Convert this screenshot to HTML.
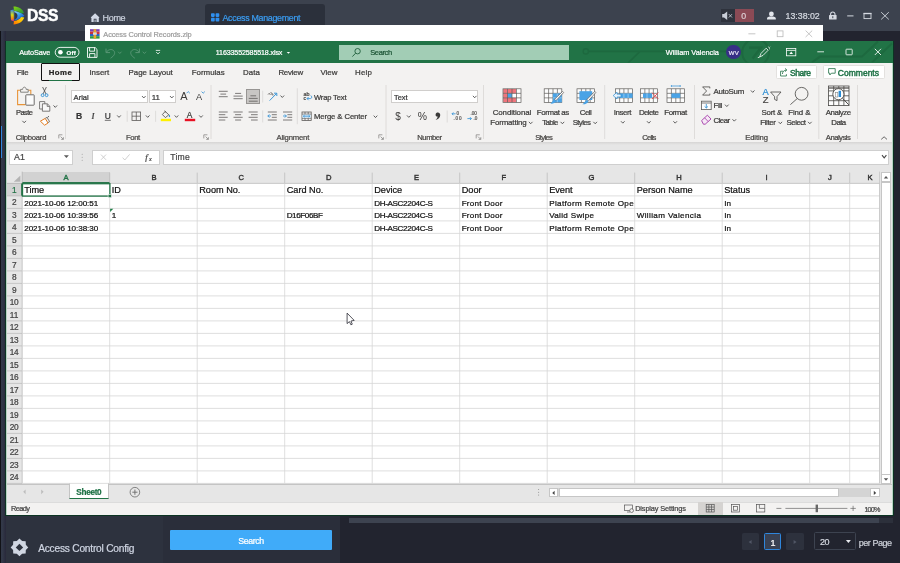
<!DOCTYPE html>
<html><head><meta charset="utf-8"><title>Access Control Records</title>
<style>
html,body{margin:0;padding:0;background:#22242f;}
#r{position:relative;width:900px;height:563px;overflow:hidden;background:#22242f;font-family:"Liberation Sans",sans-serif;}
#r div,#r span{position:absolute;display:block;white-space:nowrap;box-sizing:border-box;}
#r svg{position:absolute;left:0;top:0;}
#r span{-webkit-text-stroke:0.22px currentColor;}
</style></head><body><div id="r">
<div id="t" style="left:0;top:0;width:900px;height:563px;will-change:transform;">
<div style="left:0px;top:31px;width:162.5px;height:532px;background:#2d323e;"></div>
<div style="left:162.5px;top:516px;width:177.5px;height:47px;background:#2a2e3a;"></div>
<div style="left:0px;top:0px;width:900px;height:31px;background:#3c424e;"></div>
<div style="left:0px;top:31px;width:6px;height:532px;background:linear-gradient(90deg,#323848 0,#323848 40%,#28283a 100%);"></div>
<div style="left:0px;top:31px;width:0.8px;height:532px;background:#111217;"></div>
<div style="left:1px;top:126px;width:1.3px;height:31.5px;background:#2f86dc;"></div>
<span style="left:27px;top:5.73px;font-size:15.6px;line-height:20px;color:#ffffff;letter-spacing:-0.379px;font-weight:700;-webkit-text-stroke:0.5px #fff;">DSS</span>
<span style="left:102.6px;top:12.27px;font-size:9px;line-height:12px;color:#ccd2de;letter-spacing:-0.343px;">Home</span>
<div style="left:205px;top:4px;width:120px;height:27px;background:#2b303b;border-radius:3px 3px 0 0;"></div>
<span style="left:222.5px;top:12.14px;font-size:8.9px;line-height:12px;color:#3a9cf2;letter-spacing:-0.302px;">Access Management</span>
<div style="left:720.6px;top:9px;width:14.2px;height:12.8px;background:#2e323c;"></div>
<div style="left:734.8px;top:9px;width:19.5px;height:12.8px;background:#8b4a55;"></div>
<span style="left:741.2px;top:11.10px;font-size:8.8px;line-height:11px;color:#dccfd3;">0</span>
<span style="left:785.6px;top:11.00px;font-size:8.8px;line-height:11px;color:#d5d9e1;letter-spacing:-0.011px;">13:38:02</span>
<div style="left:85px;top:25px;width:738.4px;height:30px;background:#ffffff;"></div>
<span style="left:103.3px;top:29.80px;font-size:7.4px;line-height:10px;color:#9c9c9c;letter-spacing:-0.096px;">Access Control Records.zip</span>
<div style="left:4.7px;top:40.8px;width:889.4px;height:475.4px;background:#0c3423;"></div>
<div style="left:5.8px;top:40.8px;width:887.3px;height:474.2px;background:#f3f2f1;border:0.7px solid #b5d3c2;border-top:0;"></div>
<div style="left:5.6px;top:40.8px;width:887.7px;height:21.8px;background:#217346;"></div>
<svg width="900" height="563" viewBox="0 0 900 563"><defs><clipPath id="tb"><rect x="6" y="41" width="887" height="21.6"/></clipPath></defs><g stroke="#1d693f" stroke-width="2" fill="none" clip-path="url(#tb)"><circle cx="755.6" cy="52.4" r="13.4"/><path d="M749 47.6 L761 47.6 L752.6 58.6" stroke-width="2.4"/><path d="M588.6 51.4 L742 51.4 M628 63 L640 51.4" stroke-width="1.6"/><circle cx="585.8" cy="51.4" r="2.6" stroke-width="1.4"/><path d="M812 62.4 L820 56.6 L862 56.6 L878 41.4"/><path d="M872 62.4 L892 43.4"/></g></svg>
<span style="left:19.3px;top:48.26px;font-size:7.3px;line-height:9px;color:#fff;letter-spacing:-0.078px;">AutoSave</span>
<span style="left:66.6px;top:48.90px;font-size:6px;line-height:8px;color:#fff;letter-spacing:0.265px;font-weight:700;">Off</span>
<span style="left:215.8px;top:48.69px;font-size:7.1px;line-height:9px;color:#fff;letter-spacing:-0.130px;">11633552585518.xlsx</span>
<div style="left:339px;top:44.6px;width:230.4px;height:15.2px;background:#a2cdb5;"></div>
<span style="left:370.2px;top:48.04px;font-size:7.5px;line-height:10px;color:#1d5536;letter-spacing:-0.355px;">Search</span>
<span style="left:665.8px;top:47.90px;font-size:7.4px;line-height:10px;color:#fff;letter-spacing:-0.037px;">William Valencia</span>
<div style="left:726.2px;top:44.7px;width:14.8px;height:14.8px;background:#372f86;border-radius:50%;"></div>
<span style="left:728.7px;top:48.90px;font-size:6px;line-height:8px;color:#e8e6f5;letter-spacing:0.440px;">WV</span>
<span style="left:16.8px;top:68.48px;font-size:7.9px;line-height:10px;color:#3b3a39;letter-spacing:-0.306px;">File</span>
<div style="left:40.8px;top:62.8px;width:39.6px;height:18px;border:1.5px solid #111;border-radius:1px;"></div>
<span style="left:48.8px;top:68.44px;font-size:7.8px;line-height:10px;color:#252423;letter-spacing:0.439px;font-weight:700;">Home</span>
<div style="left:48.8px;top:79.5px;width:23px;height:1.3px;background:#217346;"></div>
<span style="left:89.4px;top:68.48px;font-size:7.9px;line-height:10px;color:#3b3a39;letter-spacing:0.010px;">Insert</span>
<span style="left:128.6px;top:68.48px;font-size:7.9px;line-height:10px;color:#3b3a39;letter-spacing:-0.016px;">Page Layout</span>
<span style="left:191.7px;top:68.48px;font-size:7.9px;line-height:10px;color:#3b3a39;letter-spacing:0.022px;">Formulas</span>
<span style="left:243px;top:68.48px;font-size:7.9px;line-height:10px;color:#3b3a39;letter-spacing:0.097px;">Data</span>
<span style="left:278.4px;top:68.48px;font-size:7.9px;line-height:10px;color:#3b3a39;letter-spacing:-0.222px;">Review</span>
<span style="left:320.4px;top:68.48px;font-size:7.9px;line-height:10px;color:#3b3a39;letter-spacing:0.005px;">View</span>
<span style="left:355px;top:68.48px;font-size:7.9px;line-height:10px;color:#3b3a39;letter-spacing:0.255px;">Help</span>
<div style="left:775.6px;top:65.3px;width:41.8px;height:13.8px;background:#fff;border:0.7px solid #e3e1df;border-radius:1.5px;"></div>
<div style="left:822.6px;top:65.3px;width:62.2px;height:13.8px;background:#fff;border:0.7px solid #e3e1df;border-radius:1.5px;"></div>
<span style="left:790px;top:68.09px;font-size:8.5px;line-height:11px;color:#1e7145;letter-spacing:-0.424px;-webkit-text-stroke:0.45px;">Share</span>
<span style="left:837.8px;top:68.09px;font-size:8.5px;line-height:11px;color:#1e7145;letter-spacing:0.015px;-webkit-text-stroke:0.45px;">Comments</span>
<span style="left:15.7px;top:132.91px;font-size:7.7px;line-height:10px;color:#484644;letter-spacing:-0.269px;">Clipboard</span>
<span style="left:126px;top:132.91px;font-size:7.7px;line-height:10px;color:#484644;letter-spacing:-0.400px;">Font</span>
<span style="left:276.6px;top:132.91px;font-size:7.7px;line-height:10px;color:#484644;letter-spacing:-0.178px;">Alignment</span>
<span style="left:417.3px;top:132.91px;font-size:7.7px;line-height:10px;color:#484644;letter-spacing:-0.495px;">Number</span>
<span style="left:535.2px;top:132.91px;font-size:7.7px;line-height:10px;color:#484644;letter-spacing:-0.637px;">Styles</span>
<span style="left:642.2px;top:132.91px;font-size:7.7px;line-height:10px;color:#484644;letter-spacing:-0.708px;">Cells</span>
<span style="left:745.2px;top:132.91px;font-size:7.7px;line-height:10px;color:#484644;letter-spacing:-0.127px;">Editing</span>
<span style="left:825.8px;top:132.91px;font-size:7.7px;line-height:10px;color:#484644;letter-spacing:-0.526px;">Analysis</span>
<span style="left:16px;top:108.14px;font-size:7.5px;line-height:10px;color:#3b3a39;letter-spacing:-0.541px;">Paste</span>
<div style="left:71.3px;top:89.8px;width:76.4px;height:13.6px;background:#fff;border:0.7px solid #d0cecc;"></div>
<span style="left:73.6px;top:92.67px;font-size:7.6px;line-height:10px;color:#333;letter-spacing:0.000px;">Arial</span>
<div style="left:149.3px;top:89.8px;width:27px;height:13.6px;background:#fff;border:0.7px solid #d0cecc;"></div>
<span style="left:151.8px;top:92.78px;font-size:7.9px;line-height:10px;color:#333;letter-spacing:-0.016px;">11</span>
<span style="left:180.2px;top:88.89px;font-size:11px;line-height:14px;color:#3b3a39;letter-spacing:0.030px;-webkit-text-stroke:0;">A</span>
<span style="left:196px;top:91.24px;font-size:9.2px;line-height:12px;color:#3b3a39;letter-spacing:0.036px;-webkit-text-stroke:0;">A</span>
<span style="left:76px;top:111.03px;font-size:8.6px;line-height:11px;color:#333;letter-spacing:-1.592px;font-weight:700;">B</span>
<span style="left:91.444px;top:111.10px;font-size:8.8px;line-height:11px;color:#333;font-style:italic;font-family:'Liberation Serif',serif;">I</span>
<span style="left:104.8px;top:110.56px;font-size:8.4px;line-height:11px;color:#333;letter-spacing:-0.248px;">U</span>
<span style="left:186.8px;top:109.66px;font-size:8.4px;line-height:11px;color:#3b3a39;letter-spacing:0.972px;">A</span>
<div style="left:246px;top:89.2px;width:14.2px;height:14.5px;background:#c8c6c4;border:0.7px solid #979593;"></div>
<span style="left:303.4px;top:90.68px;font-size:5.4px;line-height:7px;color:#484644;">ab</span>
<span style="left:303.4px;top:95.48px;font-size:5.4px;line-height:7px;color:#484644;">c</span>
<span style="left:313.9px;top:92.87px;font-size:7.6px;line-height:10px;color:#3b3a39;letter-spacing:-0.154px;">Wrap Text</span>
<span style="left:313.9px;top:112.31px;font-size:7.7px;line-height:10px;color:#3b3a39;letter-spacing:-0.082px;">Merge &amp; Center</span>
<div style="left:391.3px;top:89.6px;width:87.2px;height:13.8px;background:#fff;border:0.7px solid #d0cecc;"></div>
<span style="left:394px;top:92.60px;font-size:7.4px;line-height:10px;color:#333;letter-spacing:0.007px;">Text</span>
<span style="left:395.2px;top:110.23px;font-size:10px;line-height:13px;color:#3b3a39;letter-spacing:-0.150px;-webkit-text-stroke:0;">$</span>
<span style="left:417.7px;top:109.87px;font-size:10.4px;line-height:14px;color:#3b3a39;letter-spacing:0.344px;-webkit-text-stroke:0;">%</span>
<span style="left:456.6px;top:111.20px;font-size:4.6px;line-height:6px;color:#5e5c5a;">0</span>
<span style="left:453.4px;top:116.00px;font-size:4.6px;line-height:6px;color:#5e5c5a;letter-spacing:0.903px;">.00</span>
<span style="left:470.4px;top:111.20px;font-size:4.6px;line-height:6px;color:#5e5c5a;letter-spacing:0.003px;">.00</span>
<span style="left:473.4px;top:116.00px;font-size:4.6px;line-height:6px;color:#5e5c5a;">.0</span>
<span style="left:492.7px;top:108.28px;font-size:7.9px;line-height:10px;color:#3b3a39;letter-spacing:-0.094px;">Conditional</span>
<span style="left:490.2px;top:118.28px;font-size:7.9px;line-height:10px;color:#3b3a39;letter-spacing:-0.129px;">Formatting</span>
<span style="left:536.8px;top:108.28px;font-size:7.9px;line-height:10px;color:#3b3a39;letter-spacing:-0.381px;">Format as</span>
<span style="left:542.2px;top:118.28px;font-size:7.9px;line-height:10px;color:#3b3a39;letter-spacing:-0.645px;">Table</span>
<span style="left:579.7px;top:108.28px;font-size:7.9px;line-height:10px;color:#3b3a39;letter-spacing:-0.509px;">Cell</span>
<span style="left:572.7px;top:118.28px;font-size:7.9px;line-height:10px;color:#3b3a39;letter-spacing:-0.646px;">Styles</span>
<span style="left:613.8px;top:108.28px;font-size:7.9px;line-height:10px;color:#3b3a39;letter-spacing:-0.410px;">Insert</span>
<span style="left:639px;top:108.28px;font-size:7.9px;line-height:10px;color:#3b3a39;letter-spacing:-0.606px;">Delete</span>
<span style="left:664.3px;top:108.28px;font-size:7.9px;line-height:10px;color:#3b3a39;letter-spacing:-0.421px;">Format</span>
<span style="left:713.5px;top:87.08px;font-size:7.9px;line-height:10px;color:#3b3a39;letter-spacing:-0.285px;">AutoSum</span>
<span style="left:713.5px;top:101.08px;font-size:7.9px;line-height:10px;color:#3b3a39;letter-spacing:-0.424px;">Fill</span>
<span style="left:713.5px;top:115.78px;font-size:7.9px;line-height:10px;color:#3b3a39;letter-spacing:-0.545px;">Clear</span>
<span style="left:762.6px;top:85.72px;font-size:9.4px;line-height:12px;color:#2a8dd4;letter-spacing:0.302px;">A</span>
<span style="left:762.8px;top:94.12px;font-size:9.4px;line-height:12px;color:#484644;letter-spacing:0.666px;">Z</span>
<span style="left:761.5px;top:108.28px;font-size:7.9px;line-height:10px;color:#3b3a39;letter-spacing:-0.252px;">Sort &amp;</span>
<span style="left:760.2px;top:118.28px;font-size:7.9px;line-height:10px;color:#3b3a39;letter-spacing:-0.348px;">Filter</span>
<span style="left:788.2px;top:108.28px;font-size:7.9px;line-height:10px;color:#3b3a39;letter-spacing:-0.106px;">Find &amp;</span>
<span style="left:786.5px;top:118.28px;font-size:7.9px;line-height:10px;color:#3b3a39;letter-spacing:-0.492px;">Select</span>
<span style="left:825.8px;top:108.28px;font-size:7.9px;line-height:10px;color:#3b3a39;letter-spacing:-0.454px;">Analyze</span>
<span style="left:831.3px;top:118.28px;font-size:7.9px;line-height:10px;color:#3b3a39;letter-spacing:-0.570px;">Data</span>
<div style="left:6.8px;top:141.6px;width:885.4px;height:342px;background:#e6e6e6;"></div>
<div style="left:6.8px;top:141.6px;width:885.4px;height:3.4px;background:linear-gradient(#d6d5d4,#e6e6e6);"></div>
<div style="left:9.3px;top:149.6px;width:63.4px;height:15.4px;background:#fff;border:0.7px solid #cfcfcf;"></div>
<span style="left:14px;top:152.40px;font-size:8.8px;line-height:11px;color:#444;letter-spacing:0.020px;">A1</span>
<div style="left:92.2px;top:149.6px;width:67.8px;height:15.4px;background:#fff;border:0.7px solid #cfcfcf;"></div>
<span style="left:145.2px;top:152.03px;font-size:8.6px;line-height:11px;color:#444;font-style:italic;font-family:'Liberation Serif',serif;">f</span>
<span style="left:148.89px;top:155.40px;font-size:6px;line-height:8px;color:#444;font-style:italic;font-family:'Liberation Serif',serif;">x</span>
<div style="left:162.7px;top:149.6px;width:726px;height:15.4px;background:#fff;border:0.7px solid #cfcfcf;"></div>
<span style="left:170.2px;top:152.33px;font-size:8.6px;line-height:11px;color:#444;letter-spacing:0.270px;">Time</span>
<div style="left:22.2px;top:183.4px;width:857.3px;height:300px;background:#fff;"></div>
<div style="left:22.2px;top:171.6px;width:87.5px;height:11.8px;background:#d2d2d2;border-bottom:0.7px solid #217346;"></div>
<div style="left:6.8px;top:183.4px;width:15.4px;height:12.5px;background:#d2d2d2;border-right:1.2px solid #217346;"></div>
<span style="left:63.43px;top:173.27px;font-size:7.6px;line-height:10px;color:#217346;-webkit-text-stroke:0.4px;">A</span>
<span style="left:151.38px;top:173.27px;font-size:7.6px;line-height:10px;color:#333;-webkit-text-stroke:0.4px;">B</span>
<span style="left:238.61px;top:173.27px;font-size:7.6px;line-height:10px;color:#333;-webkit-text-stroke:0.4px;">C</span>
<span style="left:326.11px;top:173.27px;font-size:7.6px;line-height:10px;color:#333;-webkit-text-stroke:0.4px;">D</span>
<span style="left:413.88px;top:173.27px;font-size:7.6px;line-height:10px;color:#333;-webkit-text-stroke:0.4px;">E</span>
<span style="left:501.56px;top:173.27px;font-size:7.6px;line-height:10px;color:#333;-webkit-text-stroke:0.4px;">F</span>
<span style="left:588.43px;top:173.27px;font-size:7.6px;line-height:10px;color:#333;-webkit-text-stroke:0.4px;">G</span>
<span style="left:676.2px;top:173.27px;font-size:7.6px;line-height:10px;color:#333;-webkit-text-stroke:0.4px;">H</span>
<span style="left:765.5px;top:173.27px;font-size:7.6px;line-height:10px;color:#333;-webkit-text-stroke:0.4px;">I</span>
<span style="left:828.08px;top:173.27px;font-size:7.6px;line-height:10px;color:#333;-webkit-text-stroke:0.4px;">J</span>
<span style="left:867.45px;top:173.27px;font-size:7.6px;line-height:10px;color:#333;-webkit-text-stroke:0.4px;">K</span>
<span style="left:11.95px;top:184.97px;font-size:8.3px;line-height:11px;color:#217346;">1</span>
<span style="left:11.95px;top:197.47px;font-size:8.3px;line-height:11px;color:#444;">2</span>
<span style="left:11.95px;top:209.97px;font-size:8.3px;line-height:11px;color:#444;">3</span>
<span style="left:11.95px;top:222.47px;font-size:8.3px;line-height:11px;color:#444;">4</span>
<span style="left:11.95px;top:234.97px;font-size:8.3px;line-height:11px;color:#444;">5</span>
<span style="left:11.95px;top:247.47px;font-size:8.3px;line-height:11px;color:#444;">6</span>
<span style="left:11.95px;top:259.97px;font-size:8.3px;line-height:11px;color:#444;">7</span>
<span style="left:11.95px;top:272.47px;font-size:8.3px;line-height:11px;color:#444;">8</span>
<span style="left:11.95px;top:284.97px;font-size:8.3px;line-height:11px;color:#444;">9</span>
<span style="left:9.7px;top:297.47px;font-size:8.3px;line-height:11px;color:#444;letter-spacing:-0.413px;">10</span>
<span style="left:9.7px;top:309.97px;font-size:8.3px;line-height:11px;color:#444;letter-spacing:0.168px;">11</span>
<span style="left:9.7px;top:322.47px;font-size:8.3px;line-height:11px;color:#444;letter-spacing:-0.413px;">12</span>
<span style="left:9.7px;top:334.97px;font-size:8.3px;line-height:11px;color:#444;letter-spacing:-0.413px;">13</span>
<span style="left:9.7px;top:347.47px;font-size:8.3px;line-height:11px;color:#444;letter-spacing:-0.413px;">14</span>
<span style="left:9.7px;top:359.97px;font-size:8.3px;line-height:11px;color:#444;letter-spacing:-0.413px;">15</span>
<span style="left:9.7px;top:372.47px;font-size:8.3px;line-height:11px;color:#444;letter-spacing:-0.413px;">16</span>
<span style="left:9.7px;top:384.97px;font-size:8.3px;line-height:11px;color:#444;letter-spacing:-0.413px;">17</span>
<span style="left:9.7px;top:397.47px;font-size:8.3px;line-height:11px;color:#444;letter-spacing:-0.413px;">18</span>
<span style="left:9.7px;top:409.97px;font-size:8.3px;line-height:11px;color:#444;letter-spacing:-0.413px;">19</span>
<span style="left:9.7px;top:422.47px;font-size:8.3px;line-height:11px;color:#444;letter-spacing:-0.413px;">20</span>
<span style="left:9.7px;top:434.97px;font-size:8.3px;line-height:11px;color:#444;letter-spacing:-0.413px;">21</span>
<span style="left:9.7px;top:447.47px;font-size:8.3px;line-height:11px;color:#444;letter-spacing:-0.413px;">22</span>
<span style="left:9.7px;top:459.97px;font-size:8.3px;line-height:11px;color:#444;letter-spacing:-0.413px;">23</span>
<span style="left:9.7px;top:472.47px;font-size:8.3px;line-height:11px;color:#444;letter-spacing:-0.413px;">24</span>
<span style="left:24.2px;top:184.18px;font-size:9.17px;line-height:12px;color:#111;">Time</span>
<span style="left:111.7px;top:184.18px;font-size:9.17px;line-height:12px;color:#111;">ID</span>
<span style="left:199.2px;top:184.18px;font-size:9.17px;line-height:12px;color:#111;">Room No.</span>
<span style="left:286.7px;top:184.18px;font-size:9.17px;line-height:12px;color:#111;">Card No.</span>
<span style="left:374.2px;top:184.18px;font-size:9.17px;line-height:12px;color:#111;">Device</span>
<span style="left:461.7px;top:184.18px;font-size:9.17px;line-height:12px;color:#111;">Door</span>
<span style="left:549.2px;top:184.18px;font-size:9.17px;line-height:12px;color:#111;">Event</span>
<span style="left:636.7px;top:184.18px;font-size:9.17px;line-height:12px;color:#111;">Person Name</span>
<span style="left:724.2px;top:184.18px;font-size:9.17px;line-height:12px;color:#111;">Status</span>
<span style="left:24.2px;top:198.00px;font-size:8.1px;line-height:11px;color:#111;letter-spacing:-0.062px;">2021-10-06 12:00:51</span>
<span style="left:374.2px;top:198.00px;font-size:8.1px;line-height:11px;color:#111;letter-spacing:-0.351px;">DH-ASC2204C-S</span>
<span style="left:461.7px;top:198.00px;font-size:8.1px;line-height:11px;color:#111;letter-spacing:0.220px;">Front Door</span>
<span style="left:724.2px;top:198.00px;font-size:8.1px;line-height:11px;color:#111;letter-spacing:0.036px;">In</span>
<span style="left:24.2px;top:210.10px;font-size:8.1px;line-height:11px;color:#111;letter-spacing:-0.062px;">2021-10-06 10:39:56</span>
<span style="left:374.2px;top:210.10px;font-size:8.1px;line-height:11px;color:#111;letter-spacing:-0.351px;">DH-ASC2204C-S</span>
<span style="left:461.7px;top:210.10px;font-size:8.1px;line-height:11px;color:#111;letter-spacing:0.220px;">Front Door</span>
<span style="left:724.2px;top:210.10px;font-size:8.1px;line-height:11px;color:#111;letter-spacing:0.036px;">In</span>
<span style="left:24.2px;top:223.00px;font-size:8.1px;line-height:11px;color:#111;letter-spacing:-0.062px;">2021-10-06 10:38:30</span>
<span style="left:374.2px;top:223.00px;font-size:8.1px;line-height:11px;color:#111;letter-spacing:-0.351px;">DH-ASC2204C-S</span>
<span style="left:461.7px;top:223.00px;font-size:8.1px;line-height:11px;color:#111;letter-spacing:0.220px;">Front Door</span>
<span style="left:724.2px;top:223.00px;font-size:8.1px;line-height:11px;color:#111;letter-spacing:0.036px;">In</span>
<span style="left:549.2px;top:198.00px;font-size:8.1px;line-height:11px;color:#111;letter-spacing:0.346px;width:85.1px;overflow:hidden;">Platform Remote Open</span>
<span style="left:549.2px;top:223.00px;font-size:8.1px;line-height:11px;color:#111;letter-spacing:0.346px;width:85.1px;overflow:hidden;">Platform Remote Open</span>
<span style="left:549.2px;top:210.10px;font-size:8.1px;line-height:11px;color:#111;letter-spacing:0.308px;">Valid Swipe</span>
<span style="left:111.7px;top:210.10px;font-size:8.1px;line-height:11px;color:#111;">1</span>
<span style="left:286.7px;top:210.10px;font-size:8.1px;line-height:11px;color:#111;letter-spacing:-0.409px;">D16F06BF</span>
<span style="left:636.7px;top:210.10px;font-size:8.1px;line-height:11px;color:#111;letter-spacing:0.364px;">William Valencia</span>
<div style="left:880.2px;top:171.6px;width:12px;height:312px;background:#e6e6e6;"></div>
<div style="left:881.4px;top:172.4px;width:9.2px;height:10px;background:#fff;border:0.6px solid #c6c6c6;"></div>
<div style="left:881.4px;top:474.4px;width:9.2px;height:9.8px;background:#fff;border:0.6px solid #c6c6c6;"></div>
<div style="left:881.4px;top:182.2px;width:9.2px;height:292.4px;background:#fff;border:0.6px solid #c6c6c6;"></div>
<div style="left:6.8px;top:483.6px;width:885.4px;height:18.4px;background:#e6e6e6;border-top:0.8px solid #c4c4c4;"></div>
<div style="left:68.9px;top:483px;width:40.6px;height:15.8px;background:#fff;border-bottom:1.3px solid #217346;border-left:0.7px solid #c4c4c4;border-right:0.7px solid #c4c4c4;"></div>
<span style="left:76.3px;top:486.99px;font-size:8.2px;line-height:11px;color:#1e7145;letter-spacing:-0.299px;font-weight:700;">Sheet0</span>
<div style="left:558px;top:488.4px;width:312px;height:9px;background:#d4d4d4;"></div>
<div style="left:548.8px;top:488.4px;width:9.4px;height:9px;background:#fff;border:0.6px solid #c6c6c6;"></div>
<div style="left:870.2px;top:488.4px;width:9.4px;height:9px;background:#fff;border:0.6px solid #c6c6c6;"></div>
<div style="left:558.8px;top:488.4px;width:280px;height:9px;background:#fff;border:0.6px solid #c6c6c6;"></div>
<div style="left:6.8px;top:501.5px;width:885.4px;height:13.3px;background:#f3f2f1;border-top:0.7px solid #dcdcdc;"></div>
<span style="left:11px;top:504.20px;font-size:7.4px;line-height:10px;color:#444;letter-spacing:-0.596px;">Ready</span>
<span style="left:635.2px;top:504.20px;font-size:7.4px;line-height:10px;color:#444;letter-spacing:-0.151px;">Display Settings</span>
<div style="left:698px;top:502.2px;width:24.6px;height:12.6px;background:#d5d3d1;"></div>
<span style="left:864.4px;top:504.63px;font-size:7.2px;line-height:9px;color:#444;letter-spacing:-0.811px;">100%</span>
<div style="left:348.6px;top:518px;width:530.6px;height:4.6px;background:#3d4350;"></div>
<div style="left:879.2px;top:518px;width:13.4px;height:4.6px;background:#2c303b;"></div>
<span style="left:38.2px;top:541.65px;font-size:10.2px;line-height:13px;color:#cfd5e2;letter-spacing:-0.226px;">Access Control Config</span>
<div style="left:170px;top:530px;width:162.4px;height:20px;background:#40abf9;border-radius:1px;"></div>
<span style="left:238.2px;top:535.50px;font-size:8.8px;line-height:11px;color:#fff;letter-spacing:-0.379px;">Search</span>
<div style="left:741.6px;top:533px;width:17.2px;height:17.4px;background:#2d313d;border-radius:1.5px;"></div>
<div style="left:763.6px;top:533px;width:17.4px;height:17.4px;background:#3a4152;border:0.8px solid #2f86dc;border-radius:1.5px;"></div>
<div style="left:786.2px;top:533px;width:17.4px;height:17.4px;background:#2d313d;border-radius:1.5px;"></div>
<span style="left:770.4px;top:537.07px;font-size:9px;line-height:12px;color:#fff;">1</span>
<div style="left:813.6px;top:531.6px;width:42.4px;height:18.8px;background:#22242f;border:0.8px solid #3d4350;border-radius:1.5px;"></div>
<span style="left:820px;top:536.07px;font-size:9px;line-height:12px;color:#d5d9e1;letter-spacing:-0.390px;">20</span>
<span style="left:858.8px;top:536.67px;font-size:9px;line-height:12px;color:#cdd1d9;letter-spacing:-0.477px;">per Page</span>
</div>
<svg width="900" height="563" viewBox="0 0 900 563">
<defs><linearGradient id="lgG" x1="0" y1="0" x2="1" y2="1"><stop offset="0" stop-color="#86d413"/><stop offset="1" stop-color="#1f8f3c"/></linearGradient><linearGradient id="lgB" x1="0" y1="0" x2="0.6" y2="1"><stop offset="0" stop-color="#8fe0f5"/><stop offset="0.5" stop-color="#3aa0ea"/><stop offset="1" stop-color="#1747c0"/></linearGradient><linearGradient id="lgY" x1="0" y1="1" x2="1" y2="0"><stop offset="0" stop-color="#ff6a00"/><stop offset="0.6" stop-color="#ffc400"/><stop offset="1" stop-color="#f5e11a"/></linearGradient><linearGradient id="lgL" x1="0" y1="0" x2="0" y2="1"><stop offset="0" stop-color="#2f86e6"/><stop offset="0.45" stop-color="#d4dc1c"/><stop offset="0.75" stop-color="#f08a1c"/><stop offset="1" stop-color="#d3209f"/></linearGradient></defs>
<path d="M13.5 6.5 C18.6 6.5 23 9 24 13.1 L20.8 13.8 C19.4 11.7 17 10.7 14 10.7 Z" fill="url(#lgG)"/>
<path d="M14.4 10.9 C18 11.6 23.4 13.8 24.4 15.4 C23.4 17.2 18 19.6 14.4 20.4 Z" fill="url(#lgB)"/>
<path d="M14.3 12.2 C16.4 12.6 17.5 14 17.5 15.7 C17.5 17.6 16.3 19.3 14.3 19.8 Z" fill="#343844"/>
<path d="M13.5 24.6 C18.6 24.1 23.1 21.6 24.2 17.5 L21.2 16.9 C19.6 19.4 17 20.6 14 21 Z" fill="url(#lgY)"/>
<path d="M10.4 10.3 L13.7 9.5 L13.9 21.5 L11 20.3 Z" fill="url(#lgL)"/>
<path fill-rule="evenodd" d="M95.1 13.2 L99.5 17.4 L98.8 18 L98.8 22 L91.4 22 L91.4 18 L90.7 17.4 Z M93.7 22 L93.7 18.8 L96.5 18.8 L96.5 22 Z" fill="#d3d9e6"/><rect x="94.3" y="19.6" width="1.6" height="2.4" fill="#9aa1b0"/>
<rect x="211" y="13.2" width="3.7" height="3.7" rx="0.8" fill="#2f8fee"/>
<rect x="215.6" y="13.2" width="3.7" height="3.7" rx="0.8" fill="#2f8fee"/>
<rect x="211" y="17.8" width="3.7" height="3.7" rx="0.8" fill="#2f8fee"/>
<rect x="215.6" y="17.8" width="3.7" height="3.7" rx="0.8" fill="#2f8fee"/>
<path d="M722.2 14 L724 14 L727.2 11.6 L727.2 20 L724 17.6 L722.2 17.6 Z" fill="#c9ced8"/>
<path d="M728.8 14.1 L732 17.5 M732 14.1 L728.8 17.5" stroke="#c9ced8" stroke-width="0.8" fill="none"/>
<circle cx="771.4" cy="14" r="2.4" fill="#e3e6ec"/><path d="M767 19.6 L767 18.4 C767 16.8 768.6 16.4 771.4 16.4 C774.2 16.4 775.8 16.8 775.8 18.4 L775.8 19.6 Z" fill="#e3e6ec"/>
<rect x="829" y="15" width="7.6" height="4.6" rx="0.6" fill="#d5d9e1"/><path d="M830.6 15 L830.6 14.2 A2.2 2.2 0 0 1 835 14.2 L835 15" fill="none" stroke="#d5d9e1" stroke-width="1.1"/><rect x="832.3" y="16.2" width="1" height="2" fill="#3c424e"/>
<path d="M847.2 15.9 L853.5 15.9" stroke="#d5d9e1" stroke-width="1"/>
<rect x="864" y="13.6" width="7" height="5" fill="none" stroke="#d5d9e1" stroke-width="0.9"/><path d="M863.5 13.5 L871.5 13.5" stroke="#d5d9e1" stroke-width="1.3"/>
<path d="M881.2 12.2 L888.8 19.4 M888.8 12.2 L881.2 19.4" stroke="#d5d9e1" stroke-width="0.9"/>
<g><rect x="90" y="29.2" width="9.6" height="2.4" fill="#7b3fb5"/><rect x="90" y="31.6" width="9.6" height="2.4" fill="#c8343c"/><rect x="90" y="34" width="9.6" height="2.2" fill="#2d62c4"/><rect x="90" y="36.2" width="9.6" height="2.4" fill="#2f9a3c"/><rect x="93.6" y="29.2" width="2.6" height="9.4" fill="#e8a22c"/><rect x="93" y="32.4" width="3.8" height="2.4" fill="#d9d9d9"/></g>
<path d="M748.4 33.8 L755.4 33.8" stroke="#b8b8b8" stroke-width="0.8"/>
<rect x="777.2" y="30.9" width="5.8" height="5.8" fill="none" stroke="#b8b8b8" stroke-width="0.8"/>
<path d="M805.6 30.6 L812.2 37 M812.2 30.6 L805.6 37" stroke="#b8b8b8" stroke-width="0.8"/>
<rect x="55.2" y="47.4" width="23.8" height="9.8" rx="4.9" fill="none" stroke="#fff" stroke-width="0.9"/><circle cx="60.4" cy="52.3" r="2.3" fill="#fff"/>
<path d="M87.5 47.6 L95.2 47.6 L97 49.4 L97 57.4 L87.5 57.4 Z" fill="none" stroke="#fff" stroke-width="0.9"/><path d="M89.6 47.6 L89.6 51.2 L94.6 51.2 L94.6 47.6" fill="none" stroke="#fff" stroke-width="0.9"/><path d="M89.6 57.4 L89.6 53.6 L94.9 53.6 L94.9 57.4" fill="none" stroke="#fff" stroke-width="0.9"/>
<path d="M106 48.6 L106 52.6 L110 52.6 M106.4 52.2 C108 49.6 111.5 48.6 113.6 50.6 C116 53 114 56 110.6 58.2" fill="none" stroke="#5f9a7a" stroke-width="0.9"/>
<path d="M118.10 51.70L119.80 53.50L121.50 51.70" fill="none" stroke="#5f9a7a" stroke-width="0.8"/>
<path d="M139.4 48.6 L139.4 52.6 L135.4 52.6 M139 52.2 C137.4 49.6 133.9 48.6 131.8 50.6 C129.4 53 131.4 56 134.8 58.2" fill="none" stroke="#5f9a7a" stroke-width="0.9"/>
<path d="M142.70 51.70L144.40 53.50L146.10 51.70" fill="none" stroke="#5f9a7a" stroke-width="0.8"/>
<path d="M155.8 50.4 L160.2 50.4" stroke="#fff" stroke-width="0.8"/>
<path d="M156.20 52.05L158.00 53.95L159.80 52.05" fill="none" stroke="#fff" stroke-width="0.8"/>
<path d="M286.70 51.90L290.10 51.90L288.40 53.70Z" fill="#fff"/>
<circle cx="357.6" cy="51.2" r="2.7" fill="none" stroke="#1e5d3b" stroke-width="0.9"/><path d="M355.6 53.2 L352.4 56.6" stroke="#1e5d3b" stroke-width="0.9"/>
<g fill="none" stroke="#fff" stroke-width="0.8"><path d="M759.6 57 L761 53.4 L766.2 48.2 L768.2 50.2 L763 55.4 Z"/><path d="M759.4 57.4 L757.8 57.6"/><path d="M768.4 46.6 L768.8 47.6 M770 49 L769 48.6 M770.2 46.8 L769.4 47.6"/></g>
<g fill="none" stroke="#fff" stroke-width="0.8"><rect x="786.6" y="48.4" width="9.2" height="7.4"/><path d="M786.6 50.4 L795.8 50.4"/></g><path d="M789.4 54 L791.2 51.6 L793 54 Z" fill="#fff"/>
<path d="M817.3 51.8 L824 51.8" stroke="#fff" stroke-width="0.8"/>
<rect x="846" y="49.2" width="6.2" height="5.6" rx="0.6" fill="none" stroke="#fff" stroke-width="0.8"/>
<path d="M874.8 48.8 L881 55 M881 48.8 L874.8 55" stroke="#fff" stroke-width="0.85"/>
<g fill="none" stroke="#1f6e43" stroke-width="0.8"><path d="M783.2 71.2 L780.6 71.2 L780.6 76 L786.4 76 L786.4 74.2"/><path d="M782.4 74 C782.6 71.6 784 70.2 786.6 70"/><path d="M785 68.4 L786.8 70 L785 71.6"/></g>
<path d="M828.6 68.6 L835.2 68.6 L835.2 73.2 L831.4 73.2 L829.8 75 L829.8 73.2 L828.6 73.2 Z" fill="none" stroke="#1f6e43" stroke-width="0.8"/>
<path d="M65.5 85L65.5 139" stroke="#d8d6d4" stroke-width="0.8"/>
<path d="M211 85L211 139" stroke="#d8d6d4" stroke-width="0.8"/>
<path d="M386 85L386 139" stroke="#d8d6d4" stroke-width="0.8"/>
<path d="M483.5 85L483.5 139" stroke="#d8d6d4" stroke-width="0.8"/>
<path d="M604.7 85L604.7 139" stroke="#d8d6d4" stroke-width="0.8"/>
<path d="M694.5 85L694.5 139" stroke="#d8d6d4" stroke-width="0.8"/>
<path d="M818.8 85L818.8 139" stroke="#d8d6d4" stroke-width="0.8"/>
<path d="M857.5 85L857.5 139" stroke="#d8d6d4" stroke-width="0.8"/>
<g fill="none" stroke="#6a6866" stroke-width="0.6"><path d="M58.8 138.4L58.8 134.8L62.4 134.8"/><path d="M60.599999999999994 136.60000000000002L63.199999999999996 139.20000000000002M63.4 137.20000000000002L63.4 139.4L61.199999999999996 139.4"/></g>
<g fill="none" stroke="#6a6866" stroke-width="0.6"><path d="M203.8 138.4L203.8 134.8L207.4 134.8"/><path d="M205.60000000000002 136.60000000000002L208.20000000000002 139.20000000000002M208.4 137.20000000000002L208.4 139.4L206.20000000000002 139.4"/></g>
<g fill="none" stroke="#6a6866" stroke-width="0.6"><path d="M378.8 138.4L378.8 134.8L382.40000000000003 134.8"/><path d="M380.6 136.60000000000002L383.2 139.20000000000002M383.40000000000003 137.20000000000002L383.40000000000003 139.4L381.2 139.4"/></g>
<g fill="none" stroke="#6a6866" stroke-width="0.6"><path d="M476.2 138.4L476.2 134.8L479.8 134.8"/><path d="M478.0 136.60000000000002L480.59999999999997 139.20000000000002M480.8 137.20000000000002L480.8 139.4L478.59999999999997 139.4"/></g>
<path d="M881.2 139.4 L884.1 136.8 L887 139.4" fill="none" stroke="#444" stroke-width="0.8"/>
<g fill="none"><path d="M20.4 90.2 L17.6 90.2 L17.6 104.6 L25.6 104.6" stroke="#e8953a" stroke-width="1.1"/><path d="M28.4 90.2 L30.8 90.2 L30.8 94.4" stroke="#e8953a" stroke-width="1.1"/><path d="M20.6 92.2 L20.6 89.4 L22.6 89.4 C22.8 86.4 26 86.4 26.2 89.4 L28.2 89.4 L28.2 92.2 Z" fill="#f3f2f1" stroke="#6b6966" stroke-width="0.8"/><rect x="25.8" y="94.8" width="8.4" height="10.4" rx="0.6" fill="#fbfbfb" stroke="#5e5c5a" stroke-width="0.9"/></g>
<path d="M22.40 120.85L24.20 122.75L26.00 120.85" fill="none" stroke="#444" stroke-width="0.85"/>
<g fill="none" stroke="#484644" stroke-width="0.8"><path d="M42.6 87 L46 94"/><path d="M46.4 87 L43 94"/></g><circle cx="42.6" cy="95.2" r="1.4" fill="none" stroke="#2a8dd4" stroke-width="0.9"/><circle cx="46.6" cy="95.2" r="1.4" fill="none" stroke="#2a8dd4" stroke-width="0.9"/>
<g fill="#f8f8f8" stroke="#5e5c5a" stroke-width="0.8"><path d="M39.6 101.6 L44.8 101.6 L44.8 109 L39.6 109 Z"/><path d="M42.4 103.8 L47.4 103.8 L49.8 106.2 L49.8 111.2 L42.4 111.2 Z"/><path d="M47.2 104 L47.2 106.4 L49.6 106.4" fill="none"/></g>
<path d="M53.50 105.45L55.30 107.35L57.10 105.45" fill="none" stroke="#444" stroke-width="0.85"/>
<g><path d="M40.4 121.2 L45.2 118.4 L48 123 L44.6 125.2 Z" fill="#fff" stroke="#e07a1f" stroke-width="1"/><path d="M45.4 118.2 L47 117.4 L49.6 121.6 L48 122.6" fill="none" stroke="#5e5c5a" stroke-width="0.8"/><path d="M47.6 117.6 L48.8 116" stroke="#5e5c5a" stroke-width="1"/></g>
<path d="M142.00 96.05L143.80 97.95L145.60 96.05" fill="none" stroke="#444" stroke-width="0.85"/>
<path d="M170.00 96.05L171.80 97.95L173.60 96.05" fill="none" stroke="#444" stroke-width="0.85"/>
<path d="M186.6 93.2 L188.2 91.6 L189.8 93.2" fill="none" stroke="#2a8dd4" stroke-width="0.8"/>
<path d="M201.6 91.6 L203.2 93.2 L204.8 91.6" fill="none" stroke="#2a8dd4" stroke-width="0.8"/>
<path d="M104.8 120.3 L110.8 120.3" stroke="#333" stroke-width="0.7"/>
<path d="M117.20 115.45L119.00 117.35L120.80 115.45" fill="none" stroke="#444" stroke-width="0.85"/>
<path d="M127.2 110.8L127.2 121.8" stroke="#d8d6d4" stroke-width="0.8"/>
<g fill="none" stroke="#5e5c5a" stroke-width="0.8"><rect x="132" y="112" width="8.6" height="8.4"/><path d="M136.3 112 L136.3 120.4 M132 116.2 L140.6 116.2"/></g>
<path d="M145.90 115.45L147.70 117.35L149.50 115.45" fill="none" stroke="#444" stroke-width="0.85"/>
<path d="M155.6 110.8L155.6 121.8" stroke="#d8d6d4" stroke-width="0.8"/>
<g fill="none" stroke="#484644" stroke-width="0.8"><path d="M165.2 111.4 L168.8 114.8 L165.4 117.6 L162.4 114.6 Z"/><path d="M164.4 110.8 L166 112.4"/></g><path d="M169.4 114.6 C170.4 116 170.4 117 169.4 117.2 C168.6 117 168.6 116 169.4 114.6 Z" fill="#2a8dd4"/><rect x="160.8" y="118.8" width="10.2" height="2.4" fill="#fff100"/>
<path d="M174.70 115.45L176.50 117.35L178.30 115.45" fill="none" stroke="#444" stroke-width="0.85"/>
<rect x="184.8" y="118.8" width="10.4" height="2.4" fill="#e81123"/>
<path d="M199.20 115.45L201.00 117.35L202.80 115.45" fill="none" stroke="#444" stroke-width="0.85"/>
<path d="M218.8 91.3L227.7 91.3" stroke="#5e5c5a" stroke-width="0.8"/>
<path d="M220.4 94.1L226.1 94.1" stroke="#5e5c5a" stroke-width="0.8"/>
<path d="M218.8 96.7L227.7 96.7" stroke="#5e5c5a" stroke-width="0.8"/>
<path d="M235.1 93.4L241.1 93.4" stroke="#5e5c5a" stroke-width="0.8"/>
<path d="M233.5 96.1L242.7 96.1" stroke="#5e5c5a" stroke-width="0.8"/>
<path d="M233.5 98.7L242.7 98.7" stroke="#5e5c5a" stroke-width="0.8"/>
<path d="M250.4 95.8L256.1 95.8" stroke="#5e5c5a" stroke-width="0.8"/>
<path d="M248.8 98.4L257.7 98.4" stroke="#5e5c5a" stroke-width="0.8"/>
<path d="M248.8 101.2L257.7 101.2" stroke="#5e5c5a" stroke-width="0.8"/>
<path d="M262.7 90.8L262.7 102.5" stroke="#d8d6d4" stroke-width="0.8"/>
<g fill="none" stroke="#484644" stroke-width="0.7"><path d="M268 94.4 C269 92.8 270.6 93.6 270 95 M270.6 92 L272.6 94.4 M271.4 94.6 C272.6 93.4 273.8 94.6 272.8 95.6"/></g><path d="M269.6 100.6 L276.4 93.6 M274 93.2 L276.8 93.2 L276.8 96" fill="none" stroke="#2a8dd4" stroke-width="0.9"/>
<path d="M280.50 95.55L282.30 97.45L284.10 95.55" fill="none" stroke="#444" stroke-width="0.85"/>
<path d="M218.8 112.0L227.7 112.0" stroke="#5e5c5a" stroke-width="0.8"/>
<path d="M218.8 114.7L225.3 114.7" stroke="#5e5c5a" stroke-width="0.8"/>
<path d="M218.8 117.3L227.7 117.3" stroke="#5e5c5a" stroke-width="0.8"/>
<path d="M218.8 120.0L225.3 120.0" stroke="#5e5c5a" stroke-width="0.8"/>
<path d="M233.5 112.0L242.7 112.0" stroke="#5e5c5a" stroke-width="0.8"/>
<path d="M235.1 114.7L241.1 114.7" stroke="#5e5c5a" stroke-width="0.8"/>
<path d="M233.5 117.3L242.7 117.3" stroke="#5e5c5a" stroke-width="0.8"/>
<path d="M235.1 120.0L241.1 120.0" stroke="#5e5c5a" stroke-width="0.8"/>
<path d="M248.6 112.0L257.7 112.0" stroke="#5e5c5a" stroke-width="0.8"/>
<path d="M251.0 114.7L257.7 114.7" stroke="#5e5c5a" stroke-width="0.8"/>
<path d="M248.6 117.3L257.7 117.3" stroke="#5e5c5a" stroke-width="0.8"/>
<path d="M251.0 120.0L257.7 120.0" stroke="#5e5c5a" stroke-width="0.8"/>
<path d="M262.7 110.4L262.7 122.4" stroke="#d8d6d4" stroke-width="0.8"/>
<path d="M267.8 112.0L276.8 112.0" stroke="#5e5c5a" stroke-width="0.8"/>
<path d="M267.8 120.0L276.8 120.0" stroke="#5e5c5a" stroke-width="0.8"/>
<path d="M271.8 114.7L276.8 114.7" stroke="#5e5c5a" stroke-width="0.8"/>
<path d="M271.8 117.3L276.8 117.3" stroke="#5e5c5a" stroke-width="0.8"/>
<path d="M271 116 L267.8 116 M269.4 114.4 L267.8 116 L269.4 117.6" fill="none" stroke="#2a8dd4" stroke-width="0.8"/>
<path d="M283.0 112.0L292.2 112.0" stroke="#5e5c5a" stroke-width="0.8"/>
<path d="M283.0 120.0L292.2 120.0" stroke="#5e5c5a" stroke-width="0.8"/>
<path d="M287.4 114.7L292.2 114.7" stroke="#5e5c5a" stroke-width="0.8"/>
<path d="M287.4 117.3L292.2 117.3" stroke="#5e5c5a" stroke-width="0.8"/>
<path d="M283 116 L286.4 116 M284.8 114.4 L286.4 116 L284.8 117.6" fill="none" stroke="#2a8dd4" stroke-width="0.8"/>
<path d="M297.3 88.3L297.3 124.2" stroke="#d8d6d4" stroke-width="0.8"/>
<path d="M307 98.6 L310.4 98.6 C312.2 98.4 312.2 96 310.6 95.6 M308.6 97 L307 98.6 L308.6 100.2" fill="none" stroke="#2a8dd4" stroke-width="0.8"/>
<g fill="none" stroke="#5e5c5a" stroke-width="0.8"><rect x="302" y="112" width="9.2" height="8.4"/><path d="M302 114.2 L311.2 114.2 M302 118.2 L311.2 118.2 M305 112 L305 114.2 M308.2 112 L308.2 114.2 M305 118.2 L305 120.4 M308.2 118.2 L308.2 120.4"/></g><rect x="302.4" y="114.6" width="8.4" height="3.2" fill="#cfe6f7"/><path d="M303.4 116.2 L309.8 116.2 M304.6 115.2 L303.4 116.2 L304.6 117.2 M308.6 115.2 L309.8 116.2 L308.6 117.2" fill="none" stroke="#2a8dd4" stroke-width="0.7"/>
<path d="M373.70 115.65L375.50 117.55L377.30 115.65" fill="none" stroke="#444" stroke-width="0.85"/>
<path d="M472.90 95.85L474.70 97.75L476.50 95.85" fill="none" stroke="#444" stroke-width="0.85"/>
<path d="M407.00 115.45L408.80 117.35L410.60 115.45" fill="none" stroke="#444" stroke-width="0.85"/>
<path d="M437.8 112.6 C439.6 112.6 440.4 114 440.2 115.6 C440 117.6 438.4 119.4 435.6 120 C437 118.8 437.6 117.8 437.6 116.6 C436 116.6 435.4 115.6 435.6 114.4 C435.8 113.2 436.8 112.6 437.8 112.6 Z" fill="#3b3a39"/>
<path d="M447.2 110.5L447.2 122.5" stroke="#d8d6d4" stroke-width="0.8"/>
<path d="M455.6 113.8 L452 113.8 M453.4 112.4 L452 113.8 L453.4 115.2" fill="none" stroke="#2a8dd4" stroke-width="0.8"/>
<path d="M467.4 118.6 L471.4 118.6 M470 117.2 L471.4 118.6 L470 120" fill="none" stroke="#2a8dd4" stroke-width="0.8"/>
<rect x="503" y="88.8" width="18" height="13.6" fill="#fdfdfd"/><rect x="507.4" y="89" width="8.6" height="4.4" fill="#f0747c"/><rect x="507.4" y="93.4" width="4.6" height="4.4" fill="#4aa3e6"/><rect x="503.2" y="93.4" width="4.2" height="4.4" fill="#f0747c"/><rect x="503.2" y="97.8" width="12.8" height="4.4" fill="#f0747c"/><rect x="503.2" y="89" width="4.2" height="4.4" fill="#f0747c"/>
<rect x="503" y="88.8" width="18" height="13.6" fill="none" stroke="#5e5c5a" stroke-width="0.7"/><path d="M507.50 88.8L507.50 102.39999999999999M512.00 88.8L512.00 102.39999999999999M516.50 88.8L516.50 102.39999999999999M503 93.33L521 93.33M503 97.87L521 97.87" stroke="#5e5c5a" stroke-width="0.7" fill="none"/>
<path d="M528.90 121.85L530.70 123.75L532.50 121.85" fill="none" stroke="#444" stroke-width="0.85"/>
<rect x="544.2" y="88.8" width="17.6" height="13.6" fill="#fdfdfd" stroke="#5e5c5a" stroke-width="0.7"/><path d="M548.60 88.8L548.60 102.39999999999999M553.00 88.8L553.00 102.39999999999999M557.40 88.8L557.40 102.39999999999999M544.2 93.33L561.8000000000001 93.33M544.2 97.87L561.8000000000001 97.87" stroke="#5e5c5a" stroke-width="0.7" fill="none"/>
<rect x="552.8" y="93.4" width="9" height="9" fill="#4aa3e6"/><path d="M552.8 97.9 L561.8 97.9 M557.3 93.4 L557.3 102.4" stroke="#bfe0f7" stroke-width="0.6"/>
<path d="M562.6 91.4 L563.6 92.6 L556 100.6 L554.4 99.4 Z" fill="#fdfdfd" stroke="#5e5c5a" stroke-width="0.7"/><path d="M554.6 99.6 L556.2 101 C555 103.4 552.4 104 550.4 103.6 C552.2 102.8 552.4 100.6 554.6 99.6 Z" fill="#4aa3e6"/>
<path d="M560.60 121.85L562.40 123.75L564.20 121.85" fill="none" stroke="#444" stroke-width="0.85"/>
<rect x="577" y="88.8" width="17.6" height="13.6" fill="#fdfdfd" stroke="#5e5c5a" stroke-width="0.7"/><path d="M581.40 88.8L581.40 102.39999999999999M585.80 88.8L585.80 102.39999999999999M590.20 88.8L590.20 102.39999999999999M577 93.33L594.6 93.33M577 97.87L594.6 97.87" stroke="#5e5c5a" stroke-width="0.7" fill="none"/>
<rect x="579.4" y="91.2" width="12.8" height="8.8" fill="#4aa3e6"/>
<path d="M594.8 91.4 L595.8 92.6 L588.4 100.8 L586.8 99.6 Z" fill="#fdfdfd" stroke="#5e5c5a" stroke-width="0.7"/><path d="M587 99.8 L588.6 101.2 C587.4 103.8 584.6 104.6 582.4 104.2 C584.4 103.2 584.8 100.8 587 99.8 Z" fill="#4aa3e6"/>
<path d="M593.40 121.85L595.20 123.75L597.00 121.85" fill="none" stroke="#444" stroke-width="0.85"/>
<rect x="615.4" y="88.8" width="17" height="13.6" fill="#fdfdfd" stroke="#5e5c5a" stroke-width="0.7"/><path d="M619.65 88.8L619.65 102.39999999999999M623.90 88.8L623.90 102.39999999999999M628.15 88.8L628.15 102.39999999999999M615.4 93.33L632.4 93.33M615.4 97.87L632.4 97.87" stroke="#5e5c5a" stroke-width="0.7" fill="none"/>
<rect x="619.6" y="93.4" width="13" height="4.5" fill="#4aa3e6"/><path d="M613.2 95.6 L617 92.2 L617 94.2 L621 94.2 L621 97 L617 97 L617 99 Z" fill="#e8f3fc" stroke="#2a8dd4" stroke-width="0.7"/><path d="M623.9 93.4 L623.9 97.9 M628.1 93.4 L628.1 97.9" stroke="#bfe0f7" stroke-width="0.6"/>
<path d="M621.00 121.25L622.80 123.15L624.60 121.25" fill="none" stroke="#444" stroke-width="0.85"/>
<rect x="640.6" y="88.8" width="17" height="13.6" fill="#fdfdfd" stroke="#5e5c5a" stroke-width="0.7"/><path d="M644.85 88.8L644.85 102.39999999999999M649.10 88.8L649.10 102.39999999999999M653.35 88.8L653.35 102.39999999999999M640.6 93.33L657.6 93.33M640.6 97.87L657.6 97.87" stroke="#5e5c5a" stroke-width="0.7" fill="none"/>
<rect x="643" y="93.4" width="9" height="4.5" fill="#4aa3e6"/><path d="M647 93.4 L647 97.9" stroke="#bfe0f7" stroke-width="0.6"/><path d="M652 92.6 L658.4 99 M658.4 92.6 L652 99" stroke="#e8454f" stroke-width="0.9" fill="none"/>
<path d="M647.00 121.25L648.80 123.15L650.60 121.25" fill="none" stroke="#444" stroke-width="0.85"/>
<rect x="667" y="88.8" width="17.6" height="13.6" fill="#fdfdfd" stroke="#5e5c5a" stroke-width="0.7"/><path d="M671.40 88.8L671.40 102.39999999999999M675.80 88.8L675.80 102.39999999999999M680.20 88.8L680.20 102.39999999999999M667 93.33L684.6 93.33M667 97.87L684.6 97.87" stroke="#5e5c5a" stroke-width="0.7" fill="none"/>
<rect x="671.4" y="93.4" width="8.8" height="4.5" fill="#4aa3e6"/><path d="M671.4 86 L680.2 86 M671.4 85 L671.4 87 M680.2 85 L680.2 87" stroke="#2a8dd4" stroke-width="0.7" fill="none"/>
<path d="M673.40 121.25L675.20 123.15L677.00 121.25" fill="none" stroke="#444" stroke-width="0.85"/>
<path d="M709.8 88.4 L709.8 86.9 L702.6 86.9 L706.6 91 L702.6 95.1 L709.8 95.1 L709.8 93.6" fill="none" stroke="#484644" stroke-width="0.8"/>
<path d="M750.90 90.45L752.70 92.35L754.50 90.45" fill="none" stroke="#444" stroke-width="0.85"/>
<rect x="701.4" y="101.2" width="9.8" height="8.4" fill="#fdfdfd" stroke="#5e5c5a" stroke-width="0.8"/><path d="M701.4 103 L711.2 103" stroke="#5e5c5a" stroke-width="0.8"/><path d="M706.3 104 L706.3 108 M704.6 106.4 L706.3 108 L708 106.4" fill="none" stroke="#2a8dd4" stroke-width="0.8"/>
<path d="M725.00 104.65L726.80 106.55L728.60 104.65" fill="none" stroke="#444" stroke-width="0.85"/>
<path d="M701.6 120.6 L707.4 115.2 L711 119 L705.2 124.2 L703.4 124.2 Z" fill="#f6e9f6" stroke="#a33aa8" stroke-width="0.9"/><path d="M704.6 117.8 L708.2 121.6" stroke="#a33aa8" stroke-width="0.8"/>
<path d="M732.50 119.25L734.30 121.15L736.10 119.25" fill="none" stroke="#444" stroke-width="0.85"/>
<path d="M770.6 92 L781 92 L777 96.6 L777 100.6 L774.6 99.4 L774.6 96.6 Z" fill="none" stroke="#484644" stroke-width="0.8"/>
<path d="M778.50 121.85L780.30 123.75L782.10 121.85" fill="none" stroke="#444" stroke-width="0.85"/>
<circle cx="801.6" cy="93.8" r="6.4" fill="none" stroke="#484644" stroke-width="0.8"/><path d="M797.2 98.6 L790.4 104.6" stroke="#484644" stroke-width="0.8"/>
<path d="M808.00 121.85L809.80 123.75L811.60 121.85" fill="none" stroke="#444" stroke-width="0.85"/>
<rect x="828.6" y="86" width="20.4" height="19.6" fill="#fdfdfd" stroke="#484644" stroke-width="0.8"/><path d="M833.70 86L833.70 105.6M838.80 86L838.80 105.6M843.90 86L843.90 105.6M828.6 90.90L849.0 90.90M828.6 95.80L849.0 95.80M828.6 100.70L849.0 100.70" stroke="#484644" stroke-width="0.8" fill="none"/>
<path d="M828.6 88 L849 88" stroke="#484644" stroke-width="1.2"/><circle cx="838.4" cy="94.2" r="5.6" fill="#fdfdfd" stroke="#484644" stroke-width="0.9"/><rect x="835.6" y="92.4" width="2.2" height="4.6" fill="none" stroke="#8a8886" stroke-width="0.6"/><rect x="838.6" y="90.8" width="2.4" height="6.2" fill="#2a8dd4"/><path d="M842.6 98.4 L848.8 104.8" stroke="#484644" stroke-width="1"/>
<path d="M63.90 155.20L68.90 155.20L66.40 158.00Z" fill="#5a5a5a"/>
<circle cx="82.2" cy="154.2" r="0.5" fill="#999"/><circle cx="82.2" cy="157.2" r="0.5" fill="#999"/><circle cx="82.2" cy="160.2" r="0.5" fill="#999"/>
<path d="M101 154.6 L106 159.8 M106 154.6 L101 159.8" stroke="#c4c4c4" stroke-width="0.8"/>
<path d="M122.6 157.6 L124.8 160 L129.6 154.4" fill="none" stroke="#c4c4c4" stroke-width="0.8"/>
<path d="M882.00 155.20L884.20 157.80L886.40 155.20" fill="none" stroke="#444" stroke-width="1.1"/>
<path d="M109.70 172.6L109.70 183.4M197.20 172.6L197.20 183.4M284.70 172.6L284.70 183.4M372.20 172.6L372.20 183.4M459.70 172.6L459.70 183.4M547.20 172.6L547.20 183.4M634.70 172.6L634.70 183.4M722.20 172.6L722.20 183.4M809.70 172.6L809.70 183.4M849.70 172.6L849.70 183.4M6.8 195.90L22.2 195.90M6.8 208.40L22.2 208.40M6.8 220.90L22.2 220.90M6.8 233.40L22.2 233.40M6.8 245.90L22.2 245.90M6.8 258.40L22.2 258.40M6.8 270.90L22.2 270.90M6.8 283.40L22.2 283.40M6.8 295.90L22.2 295.90M6.8 308.40L22.2 308.40M6.8 320.90L22.2 320.90M6.8 333.40L22.2 333.40M6.8 345.90L22.2 345.90M6.8 358.40L22.2 358.40M6.8 370.90L22.2 370.90M6.8 383.40L22.2 383.40M6.8 395.90L22.2 395.90M6.8 408.40L22.2 408.40M6.8 420.90L22.2 420.90M6.8 433.40L22.2 433.40M6.8 445.90L22.2 445.90M6.8 458.40L22.2 458.40M6.8 470.90L22.2 470.90M6.8 483.40L22.2 483.40" stroke="#b8b8b8" stroke-width="0.7" fill="none"/>
<path d="M22.2 171.6L22.2 483.4M6.8 183.4L879.5 183.4" stroke="#b0b0b0" stroke-width="0.7" fill="none"/>
<path d="M109.70 183.4L109.70 483.4M197.20 183.4L197.20 483.4M284.70 183.4L284.70 483.4M372.20 183.4L372.20 483.4M459.70 183.4L459.70 483.4M547.20 183.4L547.20 483.4M634.70 183.4L634.70 483.4M722.20 183.4L722.20 483.4M809.70 183.4L809.70 483.4M849.70 183.4L849.70 483.4M22.2 195.90L879.5 195.90M22.2 208.40L879.5 208.40M22.2 220.90L879.5 220.90M22.2 233.40L879.5 233.40M22.2 245.90L879.5 245.90M22.2 258.40L879.5 258.40M22.2 270.90L879.5 270.90M22.2 283.40L879.5 283.40M22.2 295.90L879.5 295.90M22.2 308.40L879.5 308.40M22.2 320.90L879.5 320.90M22.2 333.40L879.5 333.40M22.2 345.90L879.5 345.90M22.2 358.40L879.5 358.40M22.2 370.90L879.5 370.90M22.2 383.40L879.5 383.40M22.2 395.90L879.5 395.90M22.2 408.40L879.5 408.40M22.2 420.90L879.5 420.90M22.2 433.40L879.5 433.40M22.2 445.90L879.5 445.90M22.2 458.40L879.5 458.40M22.2 470.90L879.5 470.90M22.2 483.40L879.5 483.40" stroke="#d6d6d6" stroke-width="0.8" fill="none"/>
<path d="M879.5 171.6L879.5 483.4" stroke="#c0c0c0" stroke-width="0.7"/>
<path d="M20.4 175.4 L20.4 181.8 L13.8 181.8 Z" fill="#b4b4b4"/>
<path d="M110.10000000000001 208.8 L113.3 208.8 L110.10000000000001 212.0 Z" fill="#1e7b45"/>
<rect x="22.5" y="183.70000000000002" width="87.4" height="12.4" fill="none" stroke="#217346" stroke-width="1.3"/>
<rect x="108.10000000000001" y="194.3" width="3.4" height="3.4" fill="#217346" stroke="#fff" stroke-width="0.6"/>
<path d="M883.8 178.6 L886 176 L888.2 178.6 Z" fill="#555"/><path d="M883.8 478.2 L888.2 478.2 L886 480.8 Z" fill="#555"/>
<path d="M347.1 313.1 L347.1 323.6 L349.4 321.6 L350.9 324.8 L352.3 324.2 L350.9 321 L354.2 320.4 Z" fill="#fff" stroke="#2a2a33" stroke-width="0.8" stroke-linejoin="round"/>
<path d="M25.6 489.4 L23.2 491.8 L25.6 494.2 Z M41.2 489.4 L43.6 491.8 L41.2 494.2 Z" fill="#bdbdbd"/>
<circle cx="134.9" cy="492.2" r="4.8" fill="none" stroke="#6a6a6a" stroke-width="0.8"/><path d="M132.3 492.2 L137.5 492.2 M134.9 489.6 L134.9 494.8" stroke="#6a6a6a" stroke-width="0.9"/>
<circle cx="538.6" cy="489.4" r="0.5" fill="#888"/><circle cx="538.6" cy="492.2" r="0.5" fill="#888"/><circle cx="538.6" cy="495" r="0.5" fill="#888"/>
<path d="M554.6 490.8 L552.2 492.9 L554.6 495 Z M873.8 490.8 L876.2 492.9 L873.8 495 Z" fill="#444"/>
<g fill="none" stroke="#555" stroke-width="0.7"><rect x="624.4" y="505" width="8" height="5.4"/><path d="M627 512 L630 512"/></g><circle cx="631.6" cy="510.6" r="1.9" fill="#f3f2f1" stroke="#555" stroke-width="0.7"/>
<rect x="706.2" y="504.6" width="8" height="7.4" fill="none" stroke="#555" stroke-width="0.7"/><path d="M708.87 504.6L708.87 512.0M711.53 504.6L711.53 512.0M706.2 507.07L714.2 507.07M706.2 509.53L714.2 509.53" stroke="#555" stroke-width="0.7" fill="none"/>
<g fill="none" stroke="#555" stroke-width="0.7"><rect x="731.4" y="504.6" width="8.2" height="7.4"/><rect x="733.6" y="506.4" width="3.8" height="3.8"/></g>
<g fill="none" stroke="#555" stroke-width="0.7"><rect x="756.6" y="504.6" width="8.2" height="7.4"/><path d="M759.4 504.6 L759.4 508.4 L764.8 508.4"/></g>
<path d="M776.4 508.4 L781.4 508.4 M785.4 508.4 L847.4 508.4 M850.4 508.4 L855.8 508.4 M853.1 505.8 L853.1 511" stroke="#666" stroke-width="0.7"/>
<rect x="815.6" y="504.6" width="2.4" height="7.6" fill="#666"/>
<path d="M28.25 547.40 L25.82 550.04 L25.67 553.62 L22.09 553.77 L19.45 556.20 L16.81 553.77 L13.23 553.62 L13.08 550.04 L10.65 547.40 L13.08 544.76 L13.23 541.18 L16.81 541.03 L19.45 538.60 L22.09 541.03 L25.67 541.18 L25.82 544.76 Z" fill="#d0d6e2"/><path d="M19.45 543.7 L23.15 547.4 L19.45 551.1 L15.75 547.4 Z" fill="#2d323e"/>
<path d="M751.6 540 L748.6 542 L751.6 544 Z M793.6 540 L796.6 542 L793.6 544 Z" fill="#505665"/>
<path d="M845.90 540.10L850.90 540.10L848.40 543.10Z" fill="#e8eaef"/>
</svg>
</div></body></html>
